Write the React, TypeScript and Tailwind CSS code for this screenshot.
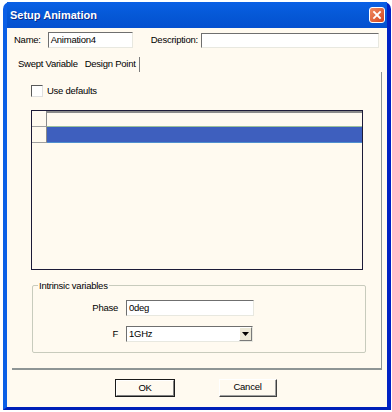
import React from "react";

const font = { fontFamily: '"Liberation Sans", Arial, sans-serif' };

function Inset({ className = "", children }: { className?: string; children?: React.ReactNode }) {
  return (
    <div
      className={
        "bg-white border-t border-l border-t-[#6f6f6f] border-l-[#6f6f6f] border-b border-r border-b-[#e8e8e0] border-r-[#e8e8e0] flex items-center " +
        className
      }
    >
      {children}
    </div>
  );
}

export default function App() {
  return (
    <div className="w-[392px] h-[412px] bg-white pl-[3px] pt-[2px] overflow-hidden text-[9.5px] tracking-[-0.25px] text-black" style={font}>
      <div className="w-[388px] h-[408px] flex flex-col rounded-t-[7px] bg-[#0a5ad8] border-l-[4px] border-l-[#0b5fe6] border-r-[4px] border-r-[#0021c4] border-b-[3px] border-b-[#0020b8]">
        {/* Title bar */}
        <div className="h-[26px] flex items-center justify-between pl-[3px] pr-[2px] bg-gradient-to-b from-[#0a60e6] via-[#0558d6] to-[#0450d0]">
          <span className="text-white font-bold text-[11px] tracking-normal [text-shadow:1px_1px_0_#0a2a8a]">Setup Animation</span>
          <div className="w-[16px] h-[16px] rounded-[3px] bg-gradient-to-br from-[#f08a60] to-[#d2431c] border border-white flex items-center justify-center">
            <svg width="10" height="10" viewBox="0 0 10 10">
              <path d="M2 2 L8 8 M8 2 L2 8" stroke="white" strokeWidth="1.8" strokeLinecap="square" />
            </svg>
          </div>
        </div>
        {/* Body */}
        <div className="flex-1 bg-[#fffaf0] flex flex-col">
          {/* Name row */}
          <div className="flex items-center mt-[4px] pl-[7px] h-[16px]">
            <span>Name:</span>
            <Inset className="ml-[7px] w-[85px] h-[16px] pl-[2px]">
              <span>Animation4</span>
            </Inset>
            <span className="ml-[18px]">Description:</span>
            <Inset className="ml-[3px] w-[178px] h-[15px]" />
          </div>
          {/* Tabs */}
          <div className="flex items-end mt-[7px] pl-[11px] h-[17px]">
            <div className="h-[14px] flex items-center pb-[1px]">Swept Variable</div>
            <div className="h-[15px] flex items-center ml-[7px] pr-[3px] border-r border-r-[#7b7b7b] pb-[1px]">Design Point</div>
          </div>
          {/* Panel */}
          <div className="ml-[5px] w-[370px] h-[298px] border-r border-r-[#8e9595] border-b-[2px] border-b-[#8e9595] flex flex-col pl-[19px]">
            <div className="flex items-center mt-[13px] h-[12px]">
              <div className="w-[12px] h-[12px] bg-white border-t border-l border-t-[#5a5a5a] border-l-[#5a5a5a] border-b border-r border-b-[#e0e0e0] border-r-[#e0e0e0]" />
              <span className="ml-[4px]">Use defaults</span>
            </div>
            {/* Grid */}
            <div className="mt-[13px] w-[332px] h-[160px] border border-[#1c1a38] flex flex-col">
              <div className="flex h-[16px]">
                <div className="w-[15px] h-[16px] border-r border-b border-r-[#8a8a8a] border-b-[#a0a0a0] bg-[#fffaf0]" />
                <div className="flex-1 border-t-[2px] border-t-[#8a8a8a] border-b border-b-[#9cc09c] bg-[#fffaf0]" />
              </div>
              <div className="flex h-[16px]">
                <div className="w-[15px] h-[16px] border-r border-b border-r-[#8a8a8a] border-b-[#a0a0a0] bg-[#fffaf0]" />
                <div className="flex-1 bg-[#3e5fbe] border-b border-b-[#4f8fcf]" />
              </div>
            </div>
            {/* Group box */}
            <div className="relative mt-[15px] ml-[1px] w-[334px] h-[68px] border border-[#c8cbbd] rounded-[2px] flex flex-col">
              <span className="absolute -top-[7px] left-[5px] px-[1px] bg-[#fffaf0]">Intrinsic variables</span>
              <div className="flex items-center mt-[14px] h-[16px]">
                <span className="w-[85px] text-right">Phase</span>
                <Inset className="ml-[8px] w-[128px] h-[16px] pl-[2px] border-b-[#404040] border-r-[#404040]">
                  <span>0deg</span>
                </Inset>
              </div>
              <div className="flex items-center mt-[10px] h-[16px]">
                <span className="w-[85px] text-right">F</span>
                <Inset className="ml-[8px] w-[127px] h-[16px] pl-[2px] justify-between">
                  <span>1GHz</span>
                  <div className="w-[13px] h-[14px] bg-[#ece9d8] border-t border-l border-t-white border-l-white border-b border-r border-b-[#7a7a7a] border-r-[#7a7a7a] flex items-center justify-center">
                    <svg width="7" height="4" viewBox="0 0 7 4">
                      <path d="M0 0 H7 L3.5 4 Z" fill="black" />
                    </svg>
                  </div>
                </Inset>
              </div>
            </div>
          </div>
          {/* Buttons */}
          <div className="flex justify-center gap-[44px] mt-[9px] pr-[2px]">
            <div className="w-[60px] h-[18px] border border-[#1a1a1a] flex">
              <div className="flex-1 border-t border-l border-t-white border-l-white border-b border-r border-b-[#808080] border-r-[#808080] flex items-center justify-center">
                OK
              </div>
            </div>
            <div className="w-[58px] h-[18px] border-t border-l border-t-white border-l-white border-b border-r border-b-[#404040] border-r-[#404040] flex">
              <div className="flex-1 border-b border-r border-b-[#a0a0a0] border-r-[#a0a0a0] flex items-center justify-center">
                Cancel
              </div>
            </div>
          </div>
        </div>
      </div>
    </div>
  );
}
